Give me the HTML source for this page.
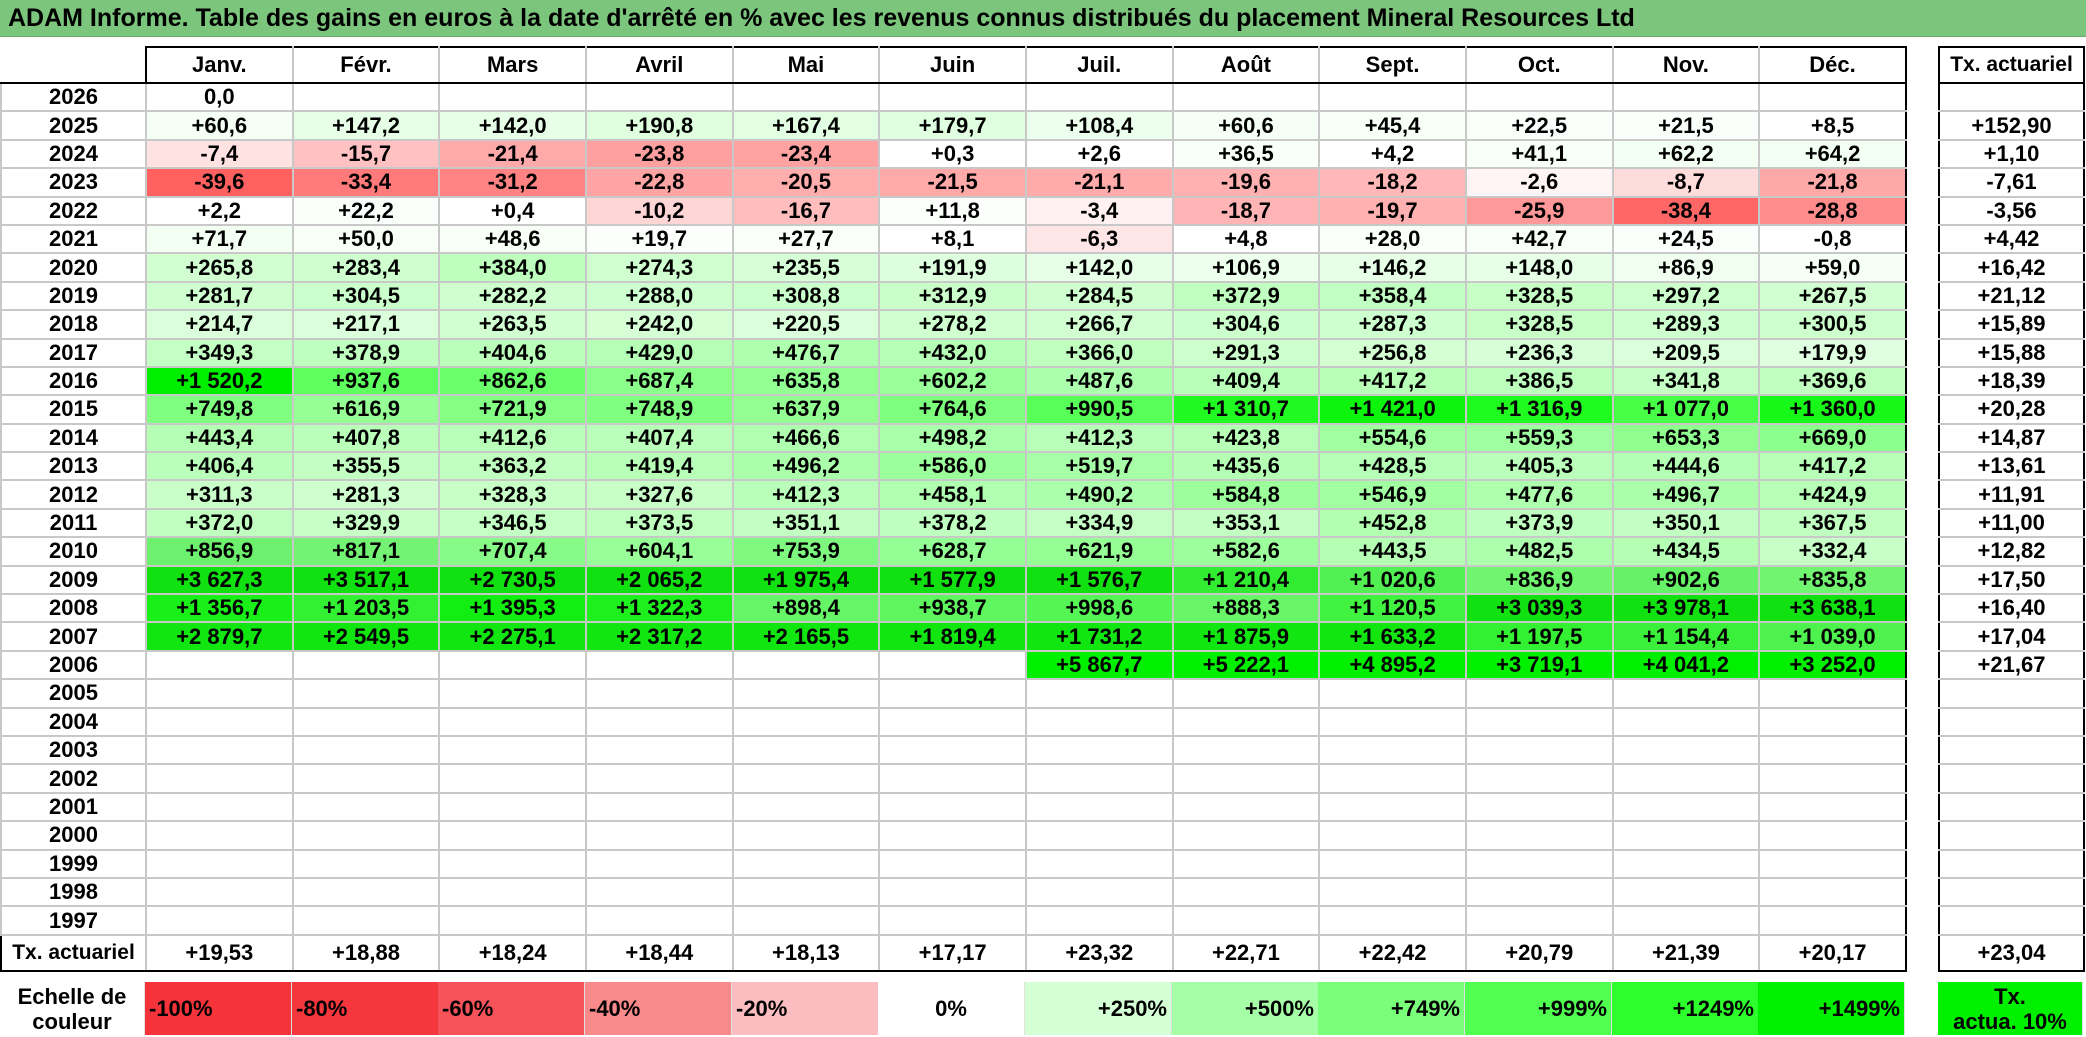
<!DOCTYPE html>
<html><head><meta charset="utf-8">
<style>
body{margin:0;width:2086px;height:1037px;background:#fff;position:relative;overflow:hidden;font-family:"Liberation Sans",sans-serif}
.title{position:absolute;left:0;top:0;width:2086px;height:37px;background:#7cc57d;font:bold 25px "Liberation Sans",sans-serif;line-height:37px;padding-left:8px;box-sizing:border-box;color:#000;border-bottom:1px solid #6aa86b;white-space:nowrap}
table{border-collapse:collapse;table-layout:fixed;position:absolute;top:46px}
td{border:2px solid #c8c8c8;text-align:center;font:bold 22px "Liberation Sans",sans-serif;padding:0;height:26.4px;white-space:nowrap;color:#000;overflow:hidden}
tr.h td{height:34px;border-top:2px solid #000;border-bottom:2px solid #000}
tr.h td.e{border:none;border-bottom:2px solid #000}
tr.t td{height:34px;border-top:2px solid #000;border-bottom:2px solid #000}
td.j{border-left:2px solid #000}
td.d{border-right:2px solid #000}
td.l{border-left:2px solid #c8c8c8}
#R td{border-left:2px solid #000;border-right:2px solid #000}
.lg{position:absolute;top:982px;height:53px;font:bold 22px "Liberation Sans",sans-serif;line-height:53px;box-sizing:border-box;padding:0 4px;border-right:1px solid #e0e0e0}
</style></head><body>
<div class="title">ADAM Informe. Table des gains en euros à la date d'arrêté en % avec les revenus connus distribués du placement Mineral Resources Ltd</div>

<table id="L" style="left:0;width:1905px">
<colgroup><col style="width:145px"><col span="12" style="width:146.67px"></colgroup>
<tr class="h"><td class="e"></td><td class="j">Janv.</td><td>Févr.</td><td>Mars</td><td>Avril</td><td>Mai</td><td>Juin</td><td>Juil.</td><td>Août</td><td>Sept.</td><td>Oct.</td><td>Nov.</td><td class="d">Déc.</td></tr>
<tr><td class="l">2026</td><td class="j" style="border-right:2px dashed #444">0,0</td><td></td><td></td><td></td><td></td><td></td><td></td><td></td><td></td><td></td><td></td><td class="d"></td></tr>
<tr><td class="l">2025</td><td class="j" style="background:rgb(245,255,245)">+60,6</td><td style="background:rgb(230,255,230)">+147,2</td><td style="background:rgb(231,255,231)">+142,0</td><td style="background:rgb(223,255,223)">+190,8</td><td style="background:rgb(227,255,227)">+167,4</td><td style="background:rgb(224,255,224)">+179,7</td><td style="background:rgb(237,255,237)">+108,4</td><td style="background:rgb(245,255,245)">+60,6</td><td style="background:rgb(247,255,247)">+45,4</td><td style="background:rgb(251,255,251)">+22,5</td><td style="background:rgb(251,255,251)">+21,5</td><td class="d" style="background:rgb(254,255,254)">+8,5</td></tr>
<tr><td class="l">2024</td><td class="j" style="background:rgb(255,226,226)">-7,4</td><td style="background:rgb(255,193,193)">-15,7</td><td style="background:rgb(255,170,170)">-21,4</td><td style="background:rgb(255,160,160)">-23,8</td><td style="background:rgb(255,162,162)">-23,4</td><td>+0,3</td><td>+2,6</td><td style="background:rgb(249,255,249)">+36,5</td><td style="background:rgb(254,255,254)">+4,2</td><td style="background:rgb(248,255,248)">+41,1</td><td style="background:rgb(244,255,244)">+62,2</td><td class="d" style="background:rgb(244,255,244)">+64,2</td></tr>
<tr><td class="l">2023</td><td class="j" style="background:rgb(255,97,97)">-39,6</td><td style="background:rgb(255,122,122)">-33,4</td><td style="background:rgb(255,131,131)">-31,2</td><td style="background:rgb(255,164,164)">-22,8</td><td style="background:rgb(255,173,173)">-20,5</td><td style="background:rgb(255,169,169)">-21,5</td><td style="background:rgb(255,171,171)">-21,1</td><td style="background:rgb(255,177,177)">-19,6</td><td style="background:rgb(255,183,183)">-18,2</td><td style="background:rgb(255,245,245)">-2,6</td><td style="background:rgb(255,220,220)">-8,7</td><td class="d" style="background:rgb(255,168,168)">-21,8</td></tr>
<tr><td class="l">2022</td><td class="j">+2,2</td><td style="background:rgb(251,255,251)">+22,2</td><td>+0,4</td><td style="background:rgb(255,214,214)">-10,2</td><td style="background:rgb(255,189,189)">-16,7</td><td style="background:rgb(253,255,253)">+11,8</td><td style="background:rgb(255,241,241)">-3,4</td><td style="background:rgb(255,181,181)">-18,7</td><td style="background:rgb(255,177,177)">-19,7</td><td style="background:rgb(255,152,152)">-25,9</td><td style="background:rgb(255,102,102)">-38,4</td><td class="d" style="background:rgb(255,140,140)">-28,8</td></tr>
<tr><td class="l">2021</td><td class="j" style="background:rgb(243,255,243)">+71,7</td><td style="background:rgb(247,255,247)">+50,0</td><td style="background:rgb(247,255,247)">+48,6</td><td style="background:rgb(252,255,252)">+19,7</td><td style="background:rgb(250,255,250)">+27,7</td><td>+8,1</td><td style="background:rgb(255,230,230)">-6,3</td><td>+4,8</td><td style="background:rgb(250,255,250)">+28,0</td><td style="background:rgb(248,255,248)">+42,7</td><td style="background:rgb(251,255,251)">+24,5</td><td class="d">-0,8</td></tr>
<tr><td class="l">2020</td><td class="j" style="background:rgb(210,255,210)">+265,8</td><td style="background:rgb(207,255,207)">+283,4</td><td style="background:rgb(190,255,190)">+384,0</td><td style="background:rgb(208,255,208)">+274,3</td><td style="background:rgb(215,255,215)">+235,5</td><td style="background:rgb(222,255,222)">+191,9</td><td style="background:rgb(231,255,231)">+142,0</td><td style="background:rgb(237,255,237)">+106,9</td><td style="background:rgb(230,255,230)">+146,2</td><td style="background:rgb(230,255,230)">+148,0</td><td style="background:rgb(240,255,240)">+86,9</td><td class="d" style="background:rgb(245,255,245)">+59,0</td></tr>
<tr><td class="l">2019</td><td class="j" style="background:rgb(207,255,207)">+281,7</td><td style="background:rgb(203,255,203)">+304,5</td><td style="background:rgb(207,255,207)">+282,2</td><td style="background:rgb(206,255,206)">+288,0</td><td style="background:rgb(203,255,203)">+308,8</td><td style="background:rgb(202,255,202)">+312,9</td><td style="background:rgb(207,255,207)">+284,5</td><td style="background:rgb(192,255,192)">+372,9</td><td style="background:rgb(194,255,194)">+358,4</td><td style="background:rgb(199,255,199)">+328,5</td><td style="background:rgb(204,255,204)">+297,2</td><td class="d" style="background:rgb(210,255,210)">+267,5</td></tr>
<tr><td class="l">2018</td><td class="j" style="background:rgb(218,255,218)">+214,7</td><td style="background:rgb(218,255,218)">+217,1</td><td style="background:rgb(210,255,210)">+263,5</td><td style="background:rgb(214,255,214)">+242,0</td><td style="background:rgb(218,255,218)">+220,5</td><td style="background:rgb(208,255,208)">+278,2</td><td style="background:rgb(210,255,210)">+266,7</td><td style="background:rgb(203,255,203)">+304,6</td><td style="background:rgb(206,255,206)">+287,3</td><td style="background:rgb(199,255,199)">+328,5</td><td style="background:rgb(206,255,206)">+289,3</td><td class="d" style="background:rgb(204,255,204)">+300,5</td></tr>
<tr><td class="l">2017</td><td class="j" style="background:rgb(196,255,196)">+349,3</td><td style="background:rgb(191,255,191)">+378,9</td><td style="background:rgb(186,255,186)">+404,6</td><td style="background:rgb(182,255,182)">+429,0</td><td style="background:rgb(174,255,174)">+476,7</td><td style="background:rgb(182,255,182)">+432,0</td><td style="background:rgb(193,255,193)">+366,0</td><td style="background:rgb(205,255,205)">+291,3</td><td style="background:rgb(211,255,211)">+256,8</td><td style="background:rgb(215,255,215)">+236,3</td><td style="background:rgb(219,255,219)">+209,5</td><td class="d" style="background:rgb(224,255,224)">+179,9</td></tr>
<tr><td class="l">2016</td><td class="j" style="background:rgb(0,238,0)">+1 520,2</td><td style="background:rgb(96,255,96)">+937,6</td><td style="background:rgb(108,255,108)">+862,6</td><td style="background:rgb(138,255,138)">+687,4</td><td style="background:rgb(147,255,147)">+635,8</td><td style="background:rgb(153,255,153)">+602,2</td><td style="background:rgb(172,255,172)">+487,6</td><td style="background:rgb(185,255,185)">+409,4</td><td style="background:rgb(184,255,184)">+417,2</td><td style="background:rgb(189,255,189)">+386,5</td><td style="background:rgb(197,255,197)">+341,8</td><td class="d" style="background:rgb(192,255,192)">+369,6</td></tr>
<tr><td class="l">2015</td><td class="j" style="background:rgb(128,255,128)">+749,8</td><td style="background:rgb(150,255,150)">+616,9</td><td style="background:rgb(132,255,132)">+721,9</td><td style="background:rgb(128,255,128)">+748,9</td><td style="background:rgb(147,255,147)">+637,9</td><td style="background:rgb(125,255,125)">+764,6</td><td style="background:rgb(87,255,87)">+990,5</td><td style="background:rgb(32,250,32)">+1 310,7</td><td style="background:rgb(13,245,13)">+1 421,0</td><td style="background:rgb(31,250,31)">+1 316,9</td><td style="background:rgb(72,255,72)">+1 077,0</td><td class="d" style="background:rgb(24,248,24)">+1 360,0</td></tr>
<tr><td class="l">2014</td><td class="j" style="background:rgb(180,255,180)">+443,4</td><td style="background:rgb(186,255,186)">+407,8</td><td style="background:rgb(185,255,185)">+412,6</td><td style="background:rgb(186,255,186)">+407,4</td><td style="background:rgb(176,255,176)">+466,6</td><td style="background:rgb(170,255,170)">+498,2</td><td style="background:rgb(185,255,185)">+412,3</td><td style="background:rgb(183,255,183)">+423,8</td><td style="background:rgb(161,255,161)">+554,6</td><td style="background:rgb(160,255,160)">+559,3</td><td style="background:rgb(144,255,144)">+653,3</td><td class="d" style="background:rgb(141,255,141)">+669,0</td></tr>
<tr><td class="l">2013</td><td class="j" style="background:rgb(186,255,186)">+406,4</td><td style="background:rgb(195,255,195)">+355,5</td><td style="background:rgb(193,255,193)">+363,2</td><td style="background:rgb(184,255,184)">+419,4</td><td style="background:rgb(171,255,171)">+496,2</td><td style="background:rgb(155,255,155)">+586,0</td><td style="background:rgb(167,255,167)">+519,7</td><td style="background:rgb(181,255,181)">+435,6</td><td style="background:rgb(182,255,182)">+428,5</td><td style="background:rgb(186,255,186)">+405,3</td><td style="background:rgb(179,255,179)">+444,6</td><td class="d" style="background:rgb(184,255,184)">+417,2</td></tr>
<tr><td class="l">2012</td><td class="j" style="background:rgb(202,255,202)">+311,3</td><td style="background:rgb(207,255,207)">+281,3</td><td style="background:rgb(199,255,199)">+328,3</td><td style="background:rgb(199,255,199)">+327,6</td><td style="background:rgb(185,255,185)">+412,3</td><td style="background:rgb(177,255,177)">+458,1</td><td style="background:rgb(172,255,172)">+490,2</td><td style="background:rgb(156,255,156)">+584,8</td><td style="background:rgb(162,255,162)">+546,9</td><td style="background:rgb(174,255,174)">+477,6</td><td style="background:rgb(171,255,171)">+496,7</td><td class="d" style="background:rgb(183,255,183)">+424,9</td></tr>
<tr><td class="l">2011</td><td class="j" style="background:rgb(192,255,192)">+372,0</td><td style="background:rgb(199,255,199)">+329,9</td><td style="background:rgb(196,255,196)">+346,5</td><td style="background:rgb(192,255,192)">+373,5</td><td style="background:rgb(195,255,195)">+351,1</td><td style="background:rgb(191,255,191)">+378,2</td><td style="background:rgb(198,255,198)">+334,9</td><td style="background:rgb(195,255,195)">+353,1</td><td style="background:rgb(178,255,178)">+452,8</td><td style="background:rgb(191,255,191)">+373,9</td><td style="background:rgb(195,255,195)">+350,1</td><td class="d" style="background:rgb(193,255,193)">+367,5</td></tr>
<tr><td class="l">2010</td><td class="j" style="background:rgb(109,240,109)">+856,9</td><td style="background:rgb(116,242,116)">+817,1</td><td style="background:rgb(135,250,135)">+707,4</td><td style="background:rgb(152,255,152)">+604,1</td><td style="background:rgb(127,248,127)">+753,9</td><td style="background:rgb(148,255,148)">+628,7</td><td style="background:rgb(149,255,149)">+621,9</td><td style="background:rgb(156,255,156)">+582,6</td><td style="background:rgb(180,255,180)">+443,5</td><td style="background:rgb(173,255,173)">+482,5</td><td style="background:rgb(181,255,181)">+434,5</td><td class="d" style="background:rgb(199,255,199)">+332,4</td></tr>
<tr><td class="l">2009</td><td class="j" style="background:rgb(17,224,17)">+3 627,3</td><td style="background:rgb(17,224,17)">+3 517,1</td><td style="background:rgb(17,224,17)">+2 730,5</td><td style="background:rgb(17,224,17)">+2 065,2</td><td style="background:rgb(17,224,17)">+1 975,4</td><td style="background:rgb(17,224,17)">+1 577,9</td><td style="background:rgb(17,224,17)">+1 576,7</td><td style="background:rgb(49,236,49)">+1 210,4</td><td style="background:rgb(82,240,82)">+1 020,6</td><td style="background:rgb(113,245,113)">+836,9</td><td style="background:rgb(102,242,102)">+902,6</td><td class="d" style="background:rgb(113,245,113)">+835,8</td></tr>
<tr><td class="l">2008</td><td class="j" style="background:rgb(24,240,24)">+1 356,7</td><td style="background:rgb(51,240,51)">+1 203,5</td><td style="background:rgb(18,238,18)">+1 395,3</td><td style="background:rgb(30,240,30)">+1 322,3</td><td style="background:rgb(102,245,102)">+898,4</td><td style="background:rgb(95,245,95)">+938,7</td><td style="background:rgb(85,245,85)">+998,6</td><td style="background:rgb(104,245,104)">+888,3</td><td style="background:rgb(65,242,65)">+1 120,5</td><td style="background:rgb(17,224,17)">+3 039,3</td><td style="background:rgb(17,224,17)">+3 978,1</td><td class="d" style="background:rgb(17,224,17)">+3 638,1</td></tr>
<tr><td class="l">2007</td><td class="j" style="background:rgb(17,230,17)">+2 879,7</td><td style="background:rgb(17,230,17)">+2 549,5</td><td style="background:rgb(17,230,17)">+2 275,1</td><td style="background:rgb(17,230,17)">+2 317,2</td><td style="background:rgb(17,230,17)">+2 165,5</td><td style="background:rgb(17,230,17)">+1 819,4</td><td style="background:rgb(17,230,17)">+1 731,2</td><td style="background:rgb(17,230,17)">+1 875,9</td><td style="background:rgb(17,230,17)">+1 633,2</td><td style="background:rgb(51,240,51)">+1 197,5</td><td style="background:rgb(59,240,59)">+1 154,4</td><td class="d" style="background:rgb(78,242,78)">+1 039,0</td></tr>
<tr><td class="l">2006</td><td class="j"></td><td></td><td></td><td></td><td></td><td></td><td style="background:rgb(0,240,0)">+5 867,7</td><td style="background:rgb(0,240,0)">+5 222,1</td><td style="background:rgb(0,240,0)">+4 895,2</td><td style="background:rgb(0,240,0)">+3 719,1</td><td style="background:rgb(0,240,0)">+4 041,2</td><td class="d" style="background:rgb(0,240,0)">+3 252,0</td></tr>
<tr><td class="l">2005</td><td class="j"></td><td></td><td></td><td></td><td></td><td></td><td></td><td></td><td></td><td></td><td></td><td class="d"></td></tr>
<tr><td class="l">2004</td><td class="j"></td><td></td><td></td><td></td><td></td><td></td><td></td><td></td><td></td><td></td><td></td><td class="d"></td></tr>
<tr><td class="l">2003</td><td class="j"></td><td></td><td></td><td></td><td></td><td></td><td></td><td></td><td></td><td></td><td></td><td class="d"></td></tr>
<tr><td class="l">2002</td><td class="j"></td><td></td><td></td><td></td><td></td><td></td><td></td><td></td><td></td><td></td><td></td><td class="d"></td></tr>
<tr><td class="l">2001</td><td class="j"></td><td></td><td></td><td></td><td></td><td></td><td></td><td></td><td></td><td></td><td></td><td class="d"></td></tr>
<tr><td class="l">2000</td><td class="j"></td><td></td><td></td><td></td><td></td><td></td><td></td><td></td><td></td><td></td><td></td><td class="d"></td></tr>
<tr><td class="l">1999</td><td class="j"></td><td></td><td></td><td></td><td></td><td></td><td></td><td></td><td></td><td></td><td></td><td class="d"></td></tr>
<tr><td class="l">1998</td><td class="j"></td><td></td><td></td><td></td><td></td><td></td><td></td><td></td><td></td><td></td><td></td><td class="d"></td></tr>
<tr><td class="l">1997</td><td class="j"></td><td></td><td></td><td></td><td></td><td></td><td></td><td></td><td></td><td></td><td></td><td class="d"></td></tr>
<tr class="t"><td style="border-left:2px solid #000;font-size:21px">Tx. actuariel</td><td class="j">+19,53</td><td>+18,88</td><td>+18,24</td><td>+18,44</td><td>+18,13</td><td>+17,17</td><td>+23,32</td><td>+22,71</td><td>+22,42</td><td>+20,79</td><td>+21,39</td><td class="d">+20,17</td></tr>
</table>

<table id="R" style="left:1938px;width:145px">
<colgroup><col style="width:145px"></colgroup>
<tr class="h"><td style="font-size:21px">Tx. actuariel</td></tr>
<tr><td></td></tr>
<tr><td>+152,90</td></tr>
<tr><td>+1,10</td></tr>
<tr><td>-7,61</td></tr>
<tr><td>-3,56</td></tr>
<tr><td>+4,42</td></tr>
<tr><td>+16,42</td></tr>
<tr><td>+21,12</td></tr>
<tr><td>+15,89</td></tr>
<tr><td>+15,88</td></tr>
<tr><td>+18,39</td></tr>
<tr><td>+20,28</td></tr>
<tr><td>+14,87</td></tr>
<tr><td>+13,61</td></tr>
<tr><td>+11,91</td></tr>
<tr><td>+11,00</td></tr>
<tr><td>+12,82</td></tr>
<tr><td>+17,50</td></tr>
<tr><td>+16,40</td></tr>
<tr><td>+17,04</td></tr>
<tr><td>+21,67</td></tr>
<tr><td style="border-top:none"></td></tr>
<tr><td style="border-top:none"></td></tr>
<tr><td style="border-top:none"></td></tr>
<tr><td style="border-top:none"></td></tr>
<tr><td style="border-top:none"></td></tr>
<tr><td style="border-top:none"></td></tr>
<tr><td style="border-top:none"></td></tr>
<tr><td style="border-top:none"></td></tr>
<tr><td style="border-top:none"></td></tr>
<tr class="t"><td>+23,04</td></tr>
</table>

<div class="lg" style="left:0;width:145px;text-align:center;line-height:25px;padding-top:2px">Echelle de<br>couleur</div>
<div class="lg" style="left:145px;width:147px;background:#f5333b">-100%</div>
<div class="lg" style="left:292px;width:147px;background:#f5363d">-80%</div>
<div class="lg" style="left:438px;width:147px;background:#f6525a">-60%</div>
<div class="lg" style="left:585px;width:147px;background:#f98a8c">-40%</div>
<div class="lg" style="left:732px;width:147px;background:#fbbdbf">-20%</div>
<div class="lg" style="left:878px;width:147px;background:#fff;text-align:center">0%</div>
<div class="lg" style="left:1025px;width:147px;background:#d5ffd5;text-align:right">+250%</div>
<div class="lg" style="left:1172px;width:147px;background:#a6ffa6;text-align:right">+500%</div>
<div class="lg" style="left:1318px;width:147px;background:#7aff7a;text-align:right">+749%</div>
<div class="lg" style="left:1465px;width:147px;background:#50ff50;text-align:right">+999%</div>
<div class="lg" style="left:1612px;width:147px;background:#2cff2c;text-align:right">+1249%</div>
<div class="lg" style="left:1758px;width:147px;background:#00f000;text-align:right">+1499%</div>
<div class="lg" style="left:1938px;width:145px;background:#00f000;text-align:center;line-height:25px;padding-top:2px">Tx.<br>actua. 10%</div>
</body></html>
